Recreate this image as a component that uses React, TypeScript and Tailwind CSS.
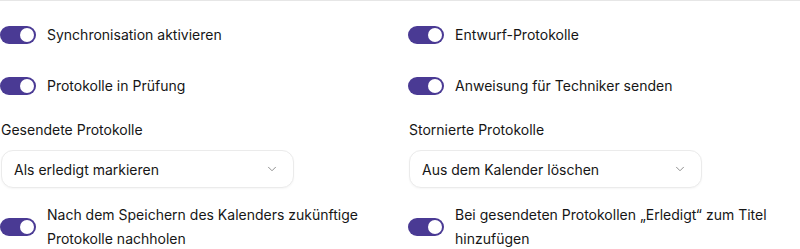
import { ChevronDown } from "lucide-react";

const Toggle = () => (
  <div className="relative h-[18px] w-[36px] shrink-0 rounded-full bg-[#4a3a94]">
    <div className="absolute right-[2px] top-[2px] h-[14px] w-[14px] rounded-full bg-white" />
  </div>
);

const ToggleRow = ({ label }: { label: string }) => (
  <div className="flex items-center gap-[11px]">
    <Toggle />
    <span className="max-w-[335px] text-[14px] leading-6 text-[#161616]">{label}</span>
  </div>
);

const SelectField = ({ label, value }: { label: string; value: string }) => (
  <div className="flex flex-col gap-2">
    <span className="text-[14px] leading-6 text-[#161616]">{label}</span>
    <div className="flex h-[38px] w-[293px] items-center justify-between rounded-xl border border-[#ebebeb] bg-white pl-3 pr-[14px] shadow-[0_1px_2px_rgba(0,0,0,0.04)]">
      <span className="text-[14px] text-[#161616]">{value}</span>
      <ChevronDown className="size-[14px] text-[#808080]" strokeWidth={1.5} />
    </div>
  </div>
);

export default function App() {
  return (
    <div className="h-[249px] w-[800px] overflow-hidden border-t border-[#e6e6e6] bg-white font-['Inter',sans-serif]">
      <div className="grid grid-cols-[408px_392px] gap-y-[27px] pt-[22px]">
        <ToggleRow label="Synchronisation aktivieren" />
        <ToggleRow label="Entwurf-Protokolle" />
        <ToggleRow label="Protokolle in Prüfung" />
        <ToggleRow label="Anweisung für Techniker senden" />
      </div>
      <div className="mt-[20px] grid grid-cols-[408px_392px] pl-px">
        <SelectField label="Gesendete Protokolle" value="Als erledigt markieren" />
        <SelectField label="Stornierte Protokolle" value="Aus dem Kalender löschen" />
      </div>
      <div className="mt-[15px] grid grid-cols-[408px_392px]">
        <ToggleRow label="Nach dem Speichern des Kalenders zukünftige Protokolle nachholen" />
        <ToggleRow label="Bei gesendeten Protokollen „Erledigt“ zum Titel hinzufügen" />
      </div>
    </div>
  );
}
